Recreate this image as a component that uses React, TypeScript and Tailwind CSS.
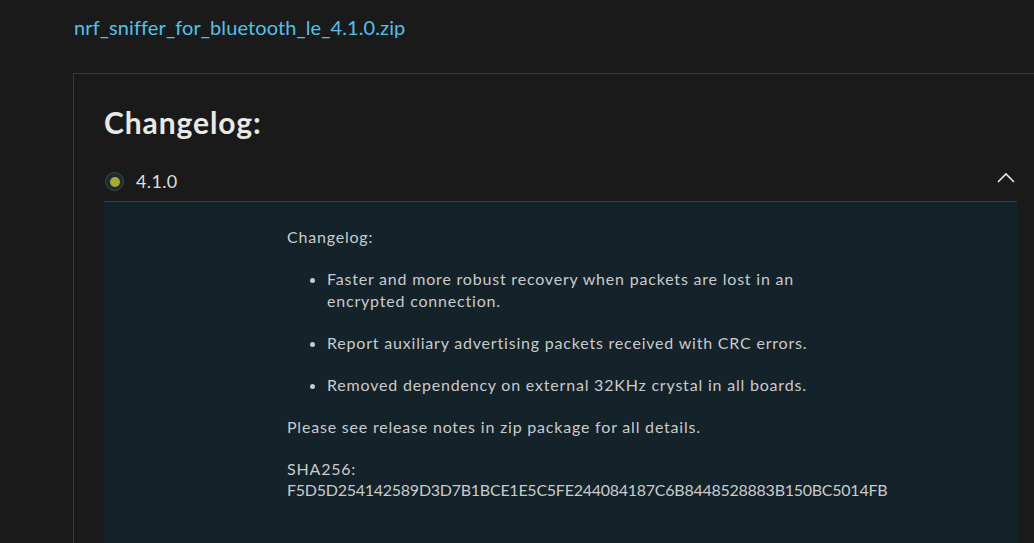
const notes = [
    "Faster and more robust recovery when packets are lost in an encrypted connection.",
    "Report auxiliary advertising packets received with CRC errors.",
    "Removed dependency on external 32KHz crystal in all boards.",
]

const font = { fontFamily: "Lato, 'Open Sans', sans-serif" }

export default function App() {
    return (
        <div className="h-[543px] w-[1034px] overflow-hidden bg-[#191a19]" style={font}>
            <div className="pl-[74px] pt-[13px]">
                <a href="#" className="text-[20px] leading-[28px] tracking-[0.005em] text-[#4ec3ea]">
                    nrf_sniffer_for_bluetooth_le_4.1.0.zip
                </a>
            </div>

            <div className="ml-[73px] mt-[32px] w-[975px] border border-[#3a3b3a] px-[30px] pt-[28px]">
                <h2 className="text-[30px] font-bold leading-[40px] tracking-[0.03em] text-[#e9e9e5]">Changelog:</h2>

                <div className="mt-[20px] flex h-[39px] items-center justify-between">
                    <div className="flex items-center gap-[12px]">
                        <span className="ml-px flex h-[19px] w-[19px] items-center justify-center rounded-full border border-[#3b4a52] bg-[#1f2b31]">
                            <span className="h-[10px] w-[10px] rounded-full bg-[#a8ab2c]" />
                        </span>
                        <span className="text-[18px] tracking-[0.02em] text-[#dededb]">4.1.0</span>
                    </div>
                    {/* chevron sits a bit above the row centre */}
                    <svg width="18" height="20" viewBox="0 0 18 20" className="mr-[2px]" fill="none">
                        <polyline points="1,10 9,2 17,10" stroke="#e6e6e6" strokeWidth="1.6" />
                    </svg>
                </div>

                <div className="border-t border-[#36444a] bg-[#14222a] pb-[80px] pt-[24px]">
                    <div className="mx-auto w-[547px] text-[16px] leading-[21.5px] tracking-[0.05em] text-[#c9cbcb]">
                        <p className="mb-[20.5px]">Changelog:</p>
                        <ul className="mb-[20.5px] list-disc pl-[40px]">
                            {notes.map((n) => (
                                <li key={n} className="mb-[20.5px] last:mb-0">
                                    {n}
                                </li>
                            ))}
                        </ul>
                        <p className="mb-[20.5px]">Please see release notes in zip package for all details.</p>
                        <p>
                            SHA256:
                            <br />
                            <span className="tracking-[-0.016em]">
                                F5D5D254142589D3D7B1BCE1E5C5FE244084187C6B8448528883B150BC5014FB
                            </span>
                        </p>
                    </div>
                </div>
            </div>
        </div>
    )
}
